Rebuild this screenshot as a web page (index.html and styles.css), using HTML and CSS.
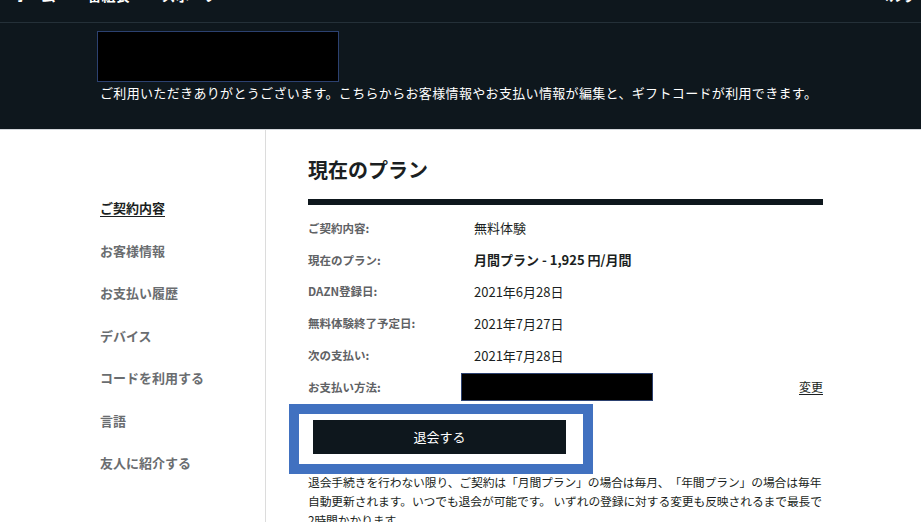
FILE: index.html
```html
<!DOCTYPE html>
<html lang="ja">
<head>
  <meta charset="UTF-8" />
  <meta name="viewport" content="width=device-width, initial-scale=1.0" />
  <title>マイ・アカウント</title>
  <link rel="stylesheet" href="styles.css">
</head>
<body>
  <div class="topbar">
    <div class="topnav">
      <div class="topnav-links">
        <span>ホーム</span>
        <span>番組表</span>
        <span>スポーツ・</span>
      </div>
      <span>ヘルプ</span>
    </div>
  </div>

  <header class="hero">
    <div class="account-name"></div>
    <p class="welcome">ご利用いただきありがとうございます。こちらからお客様情報やお支払い情報が編集と、ギフトコードが利用できます。</p>
  </header>

  <div class="layout">
    <nav class="sidebar">
      <a class="side-link active" href="#">ご契約内容</a>
      <a class="side-link" href="#">お客様情報</a>
      <a class="side-link" href="#">お支払い履歴</a>
      <a class="side-link" href="#">デバイス</a>
      <a class="side-link" href="#">コードを利用する</a>
      <a class="side-link" href="#">言語</a>
      <a class="side-link" href="#">友人に紹介する</a>
    </nav>

    <main class="content">
      <h1 class="plan-title">現在のプラン</h1>
      <div class="plan-bar"></div>

      <div class="plan-row">
        <span class="plan-label">ご契約内容:</span>
        <span class="plan-value">無料体験</span>
      </div>
      <div class="plan-row">
        <span class="plan-label">現在のプラン:</span>
        <span class="plan-value strong">月間プラン - 1,925 円/月間</span>
      </div>
      <div class="plan-row">
        <span class="plan-label">DAZN登録日:</span>
        <span class="plan-value">2021年6月28日</span>
      </div>
      <div class="plan-row">
        <span class="plan-label">無料体験終了予定日:</span>
        <span class="plan-value">2021年7月27日</span>
      </div>
      <div class="plan-row">
        <span class="plan-label">次の支払い:</span>
        <span class="plan-value">2021年7月28日</span>
      </div>
      <div class="plan-row">
        <span class="plan-label">お支払い方法:</span>
        <span class="card-box"></span>
        <a class="change-link" href="#">変更</a>
      </div>

      <div class="cancel-wrap">
        <button class="cancel-btn">退会する</button>
        <span class="marker"></span>
      </div>

      <p class="note">退会手続きを行わない限り、ご契約は「月間プラン」の場合は毎月、「年間プラン」の場合は毎年<br>自動更新されます。いつでも退会が可能です。 いずれの登録に対する変更も反映されるまで最長で<br>2時間かかります。</p>
    </main>
  </div>
</body>
</html>
```

FILE: styles.css
```css
* {
  box-sizing: border-box;
}

body {
  margin: 0;
  background: #fff;
  color: #1b1f22;
  font-family: "Noto Sans CJK JP", "Noto Sans", sans-serif;
}

/* top navigation, scrolled mostly out of view */
.topbar {
  height: 23px;
  background: #0e171d;
  border-bottom: 1px solid #243038;
  overflow: hidden;
}

.topnav {
  margin-top: -15px;
  padding: 0 4px 0 14px;
  display: flex;
  justify-content: space-between;
  color: #fff;
  font-size: 14px;
  font-weight: 700;
  line-height: 20px;
}

.topnav-links {
  display: flex;
  gap: 32px;
}

.hero {
  background: #0e171d;
  height: 107px;
  padding: 8px 0 0 97px;
  border-bottom: 1px solid #d3d7db;
}

.account-name {
  width: 242px;
  height: 51px;
  background: #000;
  border: 1px solid #2c4170;
}

.welcome {
  margin: 2px 0 0 3px;
  color: #fff;
  font-size: 13px;
  letter-spacing: 0.34px;
  line-height: 18px;
}

.layout {
  display: flex;
}

.sidebar {
  width: 266px;
  min-height: 400px;
  border-right: 1px solid #dcdcdc;
  padding: 68px 0 0 100px;
  display: flex;
  flex-direction: column;
}

.side-link {
  color: #6a6d70;
  font-size: 13px;
  font-weight: 700;
  line-height: 20px;
  margin-bottom: 22.5px;
  text-decoration: none;
}

.side-link.active {
  color: #1b1f22;
  text-decoration: underline;
  text-underline-offset: 3px;
}

.content {
  width: 557px;
  padding: 26px 0 0 42px;
}

.plan-title {
  margin: 0;
  font-size: 20px;
  font-weight: 700;
  line-height: 28px;
  color: #1b1f22;
}

.plan-bar {
  height: 6px;
  background: #0e171d;
  margin: 15px 0 7px;
}

.plan-row {
  height: 31.8px;
  display: flex;
  align-items: center;
}

.plan-label {
  width: 166px;
  color: #5f6265;
  font-size: 11.5px;
  font-weight: 700;
}

.plan-value {
  font-size: 13px;
  color: #1b1f22;
}

.plan-value.strong {
  font-weight: 700;
}

.card-box {
  width: 192px;
  height: 28px;
  margin-left: -13px;
  background: #000;
  border: 1px solid #2c4170;
}

.change-link {
  margin-left: auto;
  color: #1b1f22;
  font-size: 12px;
  text-decoration: underline;
  text-underline-offset: 2px;
}

.cancel-wrap {
  position: relative;
  margin: 17px 0 0 5px;
  width: 253px;
}

.cancel-btn {
  width: 253px;
  height: 34px;
  background: #0e171d;
  color: #fff;
  border: none;
  font-family: inherit;
  font-size: 13px;
  display: block;
}

/* highlight drawn around the cancel button */
.marker {
  position: absolute;
  left: -24px;
  top: -16px;
  width: 304px;
  height: 70px;
  border: 10px solid #4171c0;
}

.note {
  margin: 18px -20px 0 0;
  font-size: 11.8px;
  letter-spacing: -0.12px;
  line-height: 19px;
  color: #1b1f22;
  white-space: nowrap;
  text-spacing-trim: space-all;
}
```
